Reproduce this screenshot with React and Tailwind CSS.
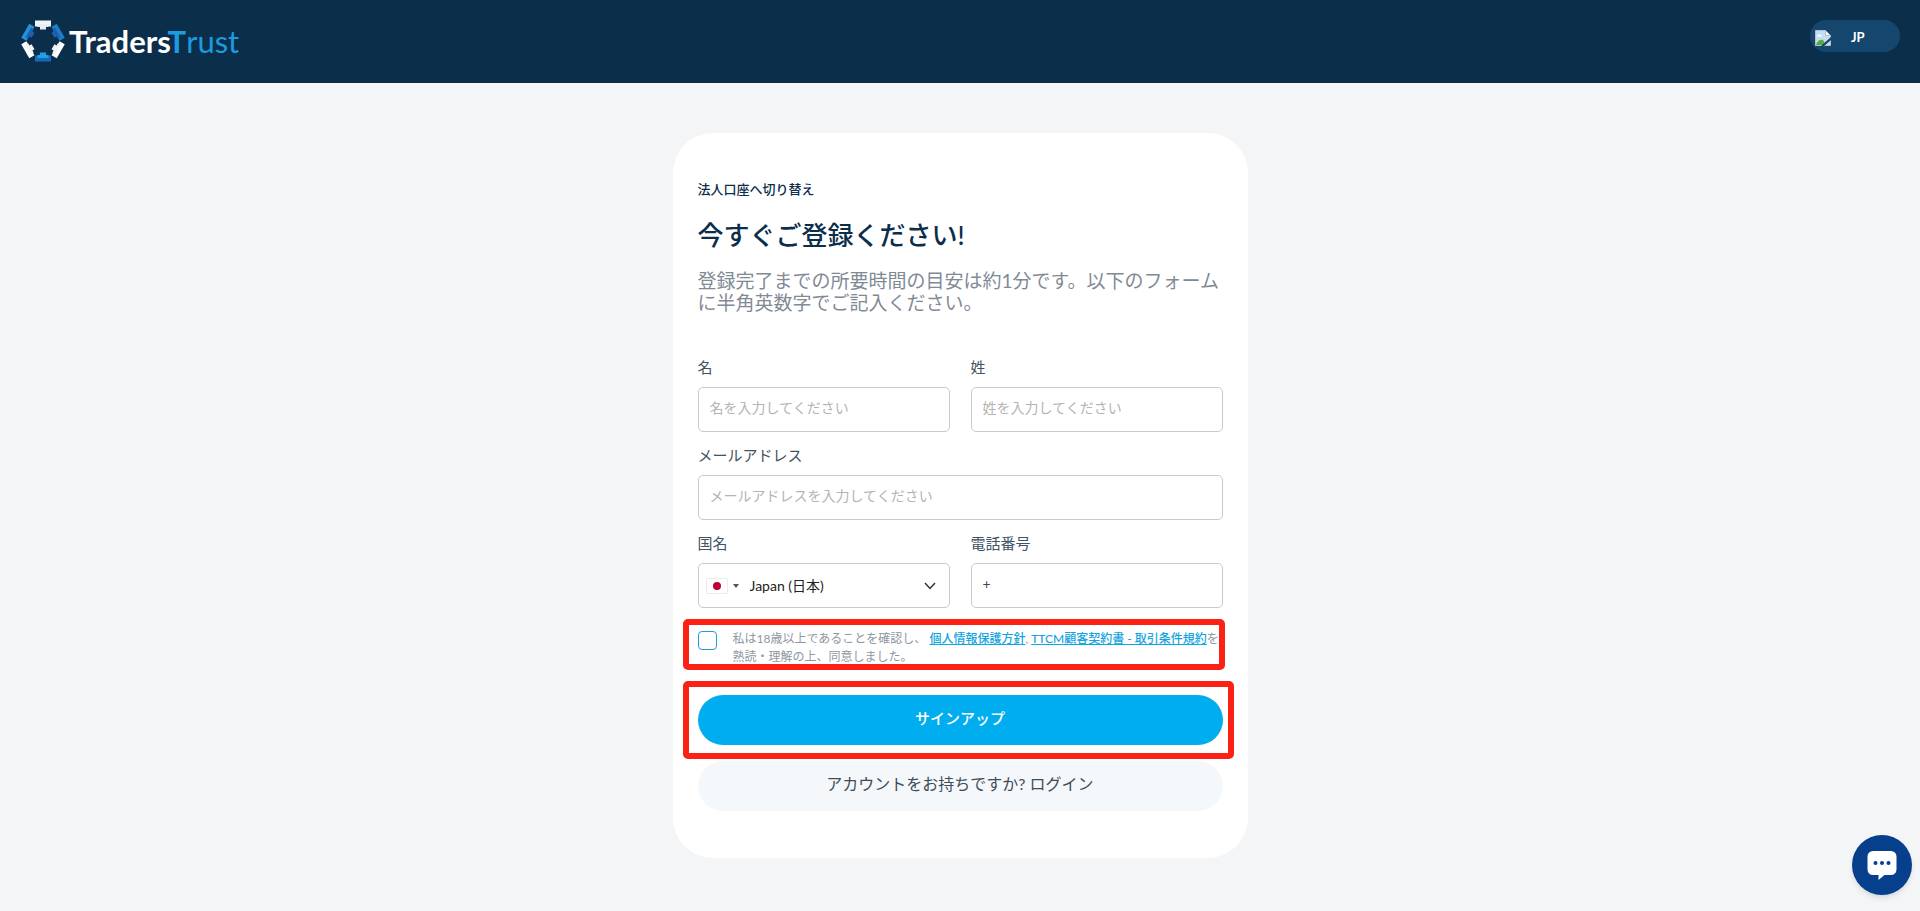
const fieldClass =
  'h-[45px] w-full rounded-[5px] border border-[#c6ccd1] bg-white px-[11px] pb-1 text-sm text-[#3b4a58] outline-none placeholder:text-[#b4b4b4] placeholder:opacity-100'

function LogoMark() {
  return (
    <svg viewBox="0 0 44 42" className="h-[42px] w-[44px]" aria-hidden="true">
      {[
        { angle: 0, main: '#eef4fb', shade: '#e6eef7' },
        { angle: 60, main: '#1b7fcb', shade: '#1f5fae' },
        { angle: 120, main: '#ffffff', shade: '#eef3f8' },
        { angle: 180, main: '#1668b8', shade: '#22a0e4' },
        { angle: 240, main: '#ffffff', shade: '#eef3f8' },
        { angle: 300, main: '#2391dc', shade: '#1f5fae' },
      ].map((part) => (
        <g key={part.angle} transform={`rotate(${part.angle} 22 21)`}>
          <path d="M14 0.500h16v6h-16z" fill={part.main} />
          <path d="M16.500 4h11v3h-2.500v2.500h-6v-2.500h-2.500z" fill={part.shade} />
        </g>
      ))}
    </svg>
  )
}

function BrokenImage() {
  return (
    <svg viewBox="0 0 16 16" className="size-4" aria-hidden="true">
      <path d="M0.500 0.500h10l5 5v10h-15z" fill="#c5dcf5" stroke="#b9bec4" />
      <path d="M10.500 0.500v5h5z" fill="#fff" stroke="#b9bec4" />
      <path d="M2 6.500c0-2 2-2.500 2.500-1.500 1-1 2.500 0 2 1.500z" fill="#fff" />
      <path d="M1 15c1-4 4-6 7-5l3 5z" fill="#4fae3c" />
      <path d="M16 7v3l-7 6h-3z" fill="#14426a" />
    </svg>
  )
}

function Field({ id, label, children }) {
  return (
    <div>
      <label htmlFor={id} className="block pb-2 text-[15px] leading-6 text-[#3f5364]">
        {label}
      </label>
      {children}
    </div>
  )
}

export default function App() {
  return (
    <div className="flex min-h-screen flex-col bg-[#f3f5f7] font-[Lato,'Noto_Sans_CJK_JP',sans-serif]">
      <header className="flex h-[83px] items-start justify-between bg-[#0b2e4b] px-5">
        <a href="#home" className="mt-5 ml-px flex items-center gap-1 text-[31px] leading-[42px]">
          <LogoMark />
          <span>
            <span className="font-bold text-white">Traders</span>
            <span className="font-bold text-[#1b9be0]">T</span>
            <span className="text-[#1b9be0]">rust</span>
          </span>
        </a>
        <button
          type="button"
          className="mt-5 flex h-8 w-[90px] items-center gap-5 rounded-full bg-[#14466e] px-[5px] pt-1 text-[13px] font-bold text-white"
        >
          <BrokenImage />
          JP
        </button>
      </header>

      <main className="flex justify-center pt-[50px] pb-[53px]">
        <form className="w-full max-w-[575px] rounded-[40px] bg-white px-[25px] pt-[45px] pb-[47px]">
          <a href="#corporate" className="block text-[13px] leading-[22px] font-medium text-[#0b2e4b]">
            法人口座へ切り替え
          </a>
          <h1 className="mt-[17px] text-[26px] leading-[36px] font-medium text-[#0b2e4b]">今すぐご登録ください!</h1>
          <p className="mt-[17px] text-[19px] leading-[22px] text-[#7f8a95]">
            登録完了までの所要時間の目安は約1分です。以下のフォームに半角英数字でご記入ください。
          </p>

          <div className="mt-[41px] grid grid-cols-2 gap-x-[21px] gap-y-[11px]">
            <Field id="first-name" label="名">
              <input id="first-name" className={fieldClass} placeholder="名を入力してください" />
            </Field>
            <Field id="last-name" label="姓">
              <input id="last-name" className={fieldClass} placeholder="姓を入力してください" />
            </Field>
            <div className="col-span-2">
              <Field id="email" label="メールアドレス">
                <input id="email" type="email" className={fieldClass} placeholder="メールアドレスを入力してください" />
              </Field>
            </div>
            <Field id="country" label="国名">
              <div className="relative">
                <select
                  id="country"
                  className="h-[45px] w-full appearance-none rounded-[5px] border border-[#c6ccd1] bg-white pl-[51px] text-sm text-[#222]"
                >
                  <option>Japan (日本)</option>
                </select>
                <div className="pointer-events-none absolute inset-0 flex items-center px-2">
                  <svg viewBox="0 0 22 16" className="h-4 w-[22px]" aria-hidden="true">
                    <path d="M0.500 0.500h21v15h-21z" fill="#fff" stroke="#ececec" />
                    <circle cx="11" cy="8" r="4" fill="#c00035" />
                  </svg>
                  <svg viewBox="0 0 6 4" className="ml-[5px] h-1 w-1.5" aria-hidden="true">
                    <path d="M0 0h6l-3 4z" fill="#555" />
                  </svg>
                  <svg viewBox="0 0 12 8" className="mr-1.5 ml-auto h-2 w-3" fill="none" stroke="#333" strokeWidth="1.500" aria-hidden="true">
                    <path d="M1 1l5 5.500 5-5.500" />
                  </svg>
                </div>
              </div>
            </Field>
            <Field id="phone" label="電話番号">
              <input id="phone" type="tel" className={fieldClass} defaultValue="+" />
            </Field>
          </div>

          <div className="relative mt-[22px] flex items-start">
            <input
              id="agree"
              type="checkbox"
              className="mt-px size-[19px] shrink-0 appearance-none rounded-[4px] border border-[#1b9fd8] bg-white"
            />
            <label htmlFor="agree" className="ml-4 text-xs leading-[18px] text-[#8e979f]">
              私は18歳以上であることを確認し、{' '}
              <a href="#privacy" className="font-medium text-[#12a5df] underline">個人情報保護方針</a>,{' '}
              <a href="#terms" className="font-medium text-[#12a5df] underline">TTCM顧客契約書 - 取引条件規約</a>
              を
              <span className="block">熟読・理解の上、同意しました。</span>
            </label>
            <div className="pointer-events-none absolute -top-[11px] -bottom-1 -left-[15px] right-[-2px] rounded-[5px] border-[6px] border-[#fb2115]" />
          </div>

          <div className="relative mt-[29px]">
            <button type="submit" className="h-[50px] w-full rounded-full bg-[#00adee] pb-[3px] text-[15px] font-medium text-white">
              サインアップ
            </button>
            <div className="pointer-events-none absolute -inset-y-[14px] -left-[15px] right-[-11px] rounded-[5px] border-[6px] border-[#fb2115]" />
          </div>
          <a
            href="#login"
            className="mt-4 block h-[50px] rounded-full bg-[#f4f8fb] text-center text-base leading-[46px] text-[#3f4d5a]"
          >
            アカウントをお持ちですか? ログイン
          </a>
        </form>
      </main>

      <button
        type="button"
        aria-label="チャット"
        className="fixed right-2 bottom-4 flex size-[60px] items-center justify-center rounded-full bg-[#063f8b] shadow-md"
      >
        <svg viewBox="0 0 30 30" className="size-[30px]" aria-hidden="true">
          <path d="M6 1h18a5.500 5.500 0 0 1 5.500 5.500v13a5.500 5.500 0 0 1-5.500 5.500h-6.500l-6 5v-5h-5.500a5.500 5.500 0 0 1-5.500-5.500v-13a5.500 5.500 0 0 1 5.500-5.500z" fill="#fff" />
          <circle cx="8.500" cy="13" r="2" fill="#063f8b" />
          <circle cx="15" cy="13" r="2" fill="#063f8b" />
          <circle cx="21.500" cy="13" r="2" fill="#063f8b" />
        </svg>
      </button>
    </div>
  )
}
